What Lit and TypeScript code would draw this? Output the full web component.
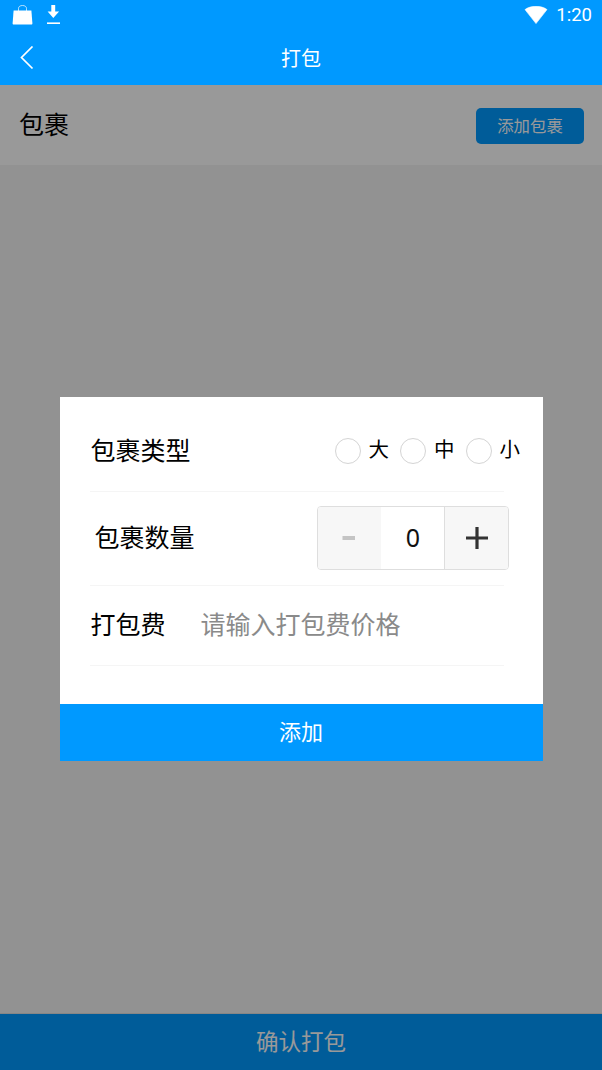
import { LitElement, html, css } from "lit";
import { customElement } from "lit/decorators.js";

const CJK = `"Noto Sans CJK SC", "Noto Sans", sans-serif`;

@customElement("app-root")
export class AppRoot extends LitElement {
  static styles = css`
    :host { display: block; width: 602px; height: 1070px; position: relative; overflow: hidden; font-family: ${css([CJK] as any)}; background: #f4f4f4; color: #000; }
    .page { display: flex; flex-direction: column; height: 1070px; }
    .top { background: #0099ff; color: #fff; height: 85px; flex: none; display: flex; flex-direction: column; }
    .status { height: 30px; display: flex; align-items: center; padding: 0 10px 0 12px; justify-content: space-between; }
    .status-left, .status-right { display: flex; align-items: center; }
    .status-left { gap: 13px; }
    .status-right { gap: 8px; }
    .time { font-family: Roboto, sans-serif; font-size: 18.5px; font-weight: 400; }
    .nav { flex: 1; position: relative; display: flex; align-items: center; justify-content: center; font-size: 20px; box-sizing: border-box; }
    .back { position: absolute; left: 18px; top: 16px; }
    .section { background: #fff; height: 80px; flex: none; display: flex; align-items: center; justify-content: space-between; padding: 0 18px 0 19px; font-size: 25px; }
    .section .title { padding-bottom: 5px; }
    .add { width: 108px; height: 36px; margin-top: 2px; padding-bottom: 2px; box-sizing: border-box; border-radius: 5px; background: #0099ff; color: #fff; font-size: 16.4px; display: flex; align-items: center; justify-content: center; }
    .spacer { flex: 1; }
    .confirm { height: 57px; flex: none; border-top: 1px solid #e0e0e0; background: #0099ff; color: #fff; display: flex; align-items: center; justify-content: center; font-size: 22.5px; padding-bottom: 5px; box-sizing: border-box; }

    .overlay { position: absolute; left: 0; right: 0; top: 85px; bottom: 0; background: rgba(0,0,0,.4); display: flex; justify-content: center; align-items: flex-start; padding-top: 312px; box-sizing: border-box; }
    .modal { width: 483px; height: 364px; background: #fff; display: flex; flex-direction: column; }
    .row { margin: 0 39px 0 31px; display: flex; align-items: center; flex: none; box-sizing: border-box; font-size: 25px; position: relative; }
    .row::after { content: ""; position: absolute; left: -1px; width: 414px; bottom: 0; height: 1px; background: #f5f5f5; }
    .r1 { height: 95px; justify-content: space-between; margin-right: 23px; padding-top: 12px; }
    .r1 .label { padding-bottom: 4px; }
    .radios { display: flex; align-items: center; }
    .radio { width: 26px; height: 26px; border-radius: 50%; border: 1px solid #d4d4d4; box-sizing: border-box; }
    .radio-label { font-size: 20.5px; width: 39.5px; padding-left: 8px; padding-bottom: 5px; box-sizing: border-box; }
    .radio-label.last { width: 28px; }
    .r2 { height: 94px; justify-content: space-between; padding-left: 4px; margin-right: 34px; }
    .r2 > span { padding-bottom: 6px; }
    .stepper { width: 192px; height: 64px; margin-bottom: 2px; border: 1px solid #dedede; border-radius: 4px; box-sizing: border-box; display: flex; overflow: hidden; }
    .step { width: 63px; background: #f7f7f7; display: flex; align-items: center; justify-content: center; flex: none; }
    .step.plus { padding-left: 2px; box-sizing: border-box; padding-bottom: 1px; }
    .value { flex: 1; display: flex; align-items: center; justify-content: center; font-size: 25px; border-right: 1px solid #dedede; font-family: "Noto Sans", sans-serif; color: #111; padding-left: 2px; padding-bottom: 2px; box-sizing: border-box; }
    .r3 { height: 80px; gap: 36px; }
    .r3 span { padding-bottom: 6px; }
    .ph { color: #8a8a8a; padding-bottom: 7px; margin-left: -1px; }
    .fill { flex: 1; }
    .submit { height: 57px; flex: none; background: #0099ff; color: #fff; display: flex; align-items: center; justify-content: center; font-size: 22px; padding-bottom: 5px; box-sizing: border-box; }
  `;

  render() {
    return html`
      <div class="page">
        <div class="top">
          <div class="status">
            <div class="status-left">
              <svg width="21" height="20" viewBox="0 0 21 20"><path d="M1.6 5.4h17.8l1 13.2c0 .6-.4 1-1 1H1.6c-.6 0-1-.4-1-1z" fill="#fff"/><path d="M6.5 6.5V3.4C6.5 1.6 8.2.5 10.5.5s4 1.1 4 2.9v3.1" fill="none" stroke="#fff" stroke-width=".7"/></svg>
              <svg width="15" height="20" viewBox="0 0 15 20"><path d="M5.3 0h3.9v6.4h3.9L7.3 13 1.6 6.4h3.7z" fill="#fff"/><rect x="1" y="17.4" width="13" height="1.6" fill="#fff"/></svg>
            </div>
            <div class="status-right">
              <svg width="24" height="18" viewBox="0 0 24 18"><path d="M1 3.6C4 1.4 7.8.3 12 .3s8 1.1 11 3.3L12 17.6z" fill="#fff" stroke="#fff" stroke-width=".6" stroke-linejoin="round"/></svg>
              <span class="time">1:20</span>
            </div>
          </div>
          <div class="nav">
            <svg class="back" width="18" height="24" viewBox="0 0 18 24"><path d="M14.5 1.5 3.5 12.5l11 11" transform="translate(0 -1)" fill="none" stroke="#fff" stroke-width="1.7"/></svg>
            打包
          </div>
        </div>
        <div class="section">
          <span class="title">包裹</span>
          <div class="add">添加包裹</div>
        </div>
        <div class="spacer"></div>
        <div class="confirm">确认打包</div>
      </div>
      <div class="overlay">
        <div class="modal">
          <div class="row r1">
            <span class="label">包裹类型</span>
            <div class="radios">
              <div class="radio"></div><span class="radio-label">大</span>
              <div class="radio"></div><span class="radio-label">中</span>
              <div class="radio"></div><span class="radio-label last">小</span>
            </div>
          </div>
          <div class="row r2">
            <span>包裹数量</span>
            <div class="stepper">
              <div class="step"><svg width="14" height="6" viewBox="0 0 14 6"><rect x="0.5" y="1" width="12.5" height="4" fill="#c4c4c4"/></svg></div>
              <div class="value">0</div>
              <div class="step plus"><svg width="24" height="24" viewBox="0 0 24 24"><path d="M12 1v22M1 12h22" stroke="#333" stroke-width="3.2" fill="none"/></svg></div>
            </div>
          </div>
          <div class="row r3">
            <span>打包费</span>
            <span class="ph">请输入打包费价格</span>
          </div>
          <div class="fill"></div>
          <div class="submit">添加</div>
        </div>
      </div>
    `;
  }
}
